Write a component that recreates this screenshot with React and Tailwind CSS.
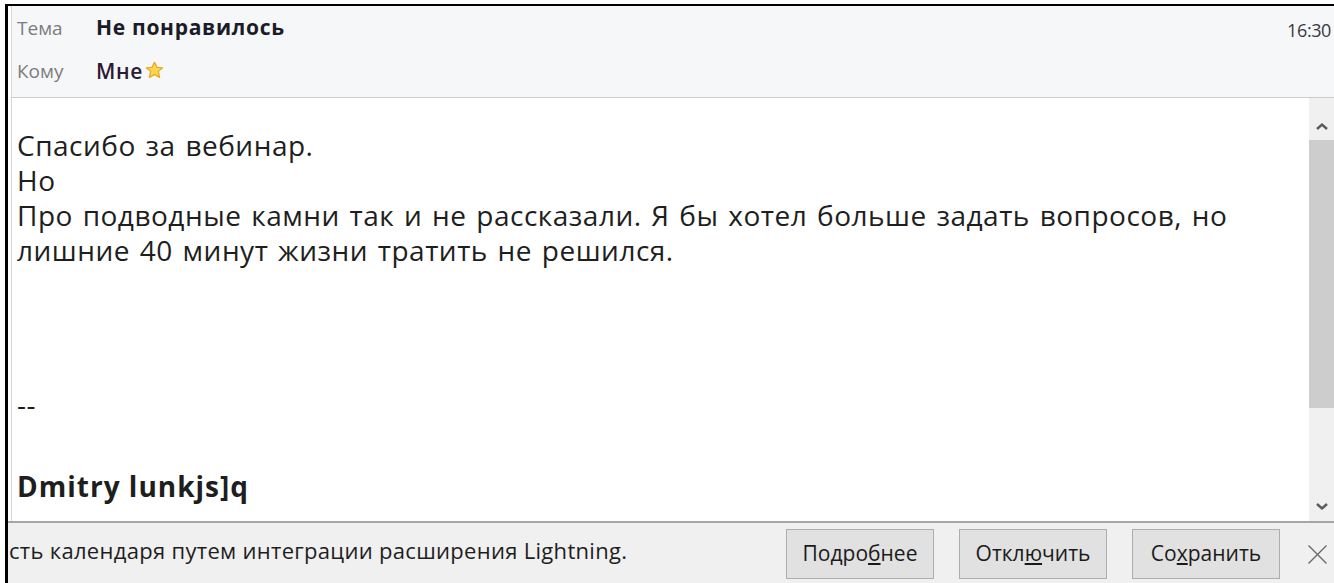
import React from "react";

function Star() {
  return (
    <svg width="19" height="18" viewBox="0 0 16 16" preserveAspectRatio="none" className="block">
      <path
        d="M8 1.2 L10 5.6 L14.8 6 L11.2 9.2 L12.3 14.6 L8 11.9 L3.7 14.6 L4.8 9.2 L1.2 6 L6 5.6 Z"
        fill="#ffd850"
        stroke="#e8a628"
        strokeWidth="1.1"
        strokeLinejoin="round"
      />
    </svg>
  );
}

function ScrollArrowUp() {
  return (
    <svg width="14" height="9" viewBox="0 0 14 9">
      <path d="M2 7 L7 2.5 L12 7" fill="none" stroke="#5a5a5a" strokeWidth="2.4" />
    </svg>
  );
}

function ScrollArrowDown() {
  return (
    <svg width="14" height="9" viewBox="0 0 14 9">
      <path d="M2 2 L7 6.5 L12 2" fill="none" stroke="#5a5a5a" strokeWidth="2.4" />
    </svg>
  );
}

function Btn({ children }) {
  return (
    <button className="h-[50px] w-[148px] border border-[#adadad] bg-[#e1e1e1] text-[21px] text-[#1a1a1a] flex items-center justify-center">
      {children}
    </button>
  );
}

export default function App() {
  return (
    <div
      className="w-[1334px] h-[583px] bg-white pt-[4px] pl-[5px] overflow-hidden flex flex-col"
      style={{ fontFamily: '"Open Sans", "Noto Sans", sans-serif' }}
    >
      <div className="flex-1 flex flex-col border-t-[2px] border-l-[3px] border-black min-h-0">
        {/* message header */}
        <div className="h-[92px] shrink-0 bg-[#f6f7f8] border-l border-[#d6d6d6] ml-[3px] border-b border-b-[#c9cdd2] flex">
          <div className="flex-1 pl-[5px] pt-[7px]">
            <div className="flex items-baseline leading-[28px]">
              <span className="w-[79px] text-[19px] text-[#7c7c7c]">Тема</span>
              <span className="font-bold text-[#1c1c28] text-[21px] tracking-[0.7px]">Не понравилось</span>
            </div>
            <div className="flex items-end mt-[15px] leading-[28px]">
              <span className="w-[79px] text-[19px] text-[#7c7c7c]">Кому</span>
              <span className="flex items-end">
                <span className="font-semibold text-[#2e1a32] text-[21px] tracking-[0.6px]">Мне</span>
                <span className="mb-[6px] ml-[2px]">
                  <Star />
                </span>
              </span>
            </div>
          </div>
          <div className="pr-[3px] pt-[12px] text-[18px] leading-[24px] tracking-[-0.4px] text-[#3a3a3a]">16:30</div>
        </div>

        {/* message body */}
        <div className="flex-1 flex min-h-0 ml-[3px] border-l border-[#d6d6d6]">
          <div className="flex-1 pl-[5px] pt-[30px] text-[28px] leading-[35px] tracking-[0.5px] [word-spacing:2px] text-[#1e1e1e]">
            <div>Спасибо за вебинар.</div>
            <div>Но</div>
            <div>Про подводные камни так и не рассказали. Я бы хотел больше задать вопросов, но</div>
            <div>лишние 40 минут жизни тратить не решился.</div>
            <div className="h-[119px]"></div>
            <div>--</div>
            <div className="h-[47px]"></div>
            <div className="font-bold tracking-[1px] [word-spacing:0px]">Dmitry lunkjs]q</div>
          </div>
          <div className="w-[25px] bg-[#f0f0f0] flex flex-col">
            <div className="h-[42px] flex items-center justify-center pt-[14px]">
              <ScrollArrowUp />
            </div>
            <div className="h-[268px] bg-[#cdcdcd]"></div>
            <div className="flex-1"></div>
            <div className="h-[30px] flex items-center justify-center">
              <ScrollArrowDown />
            </div>
          </div>
        </div>

        {/* notification bar */}
        <div className="h-[62px] shrink-0 bg-[#f0f0f0] border-t-2 border-[#a6a6a6] flex items-start">
          <div className="flex-1 pl-[1px] pt-[12px] text-[22px] leading-[30px] tracking-[0.3px] text-[#1e1e1e] whitespace-nowrap">
            сть календаря путем интеграции расширения Lightning.
          </div>
          <div className="flex items-center gap-[25px] pt-[6px]">
            <Btn>
              <span>
                Подро<span className="underline">б</span>нее
              </span>
            </Btn>
            <Btn>
              <span>
                Откл<span className="underline">ю</span>чить
              </span>
            </Btn>
            <Btn>
              <span>
                Со<span className="underline">х</span>ранить
              </span>
            </Btn>
          </div>
          <div className="w-[54px] pl-[27px] pt-[21px]">
            <svg width="21" height="21" viewBox="0 0 21 21" className="block">
              <path d="M1.5 1.5 L19.5 19.5 M19.5 1.5 L1.5 19.5" stroke="#6a6a6a" strokeWidth="1.4" />
            </svg>
          </div>
        </div>
      </div>
    </div>
  );
}
